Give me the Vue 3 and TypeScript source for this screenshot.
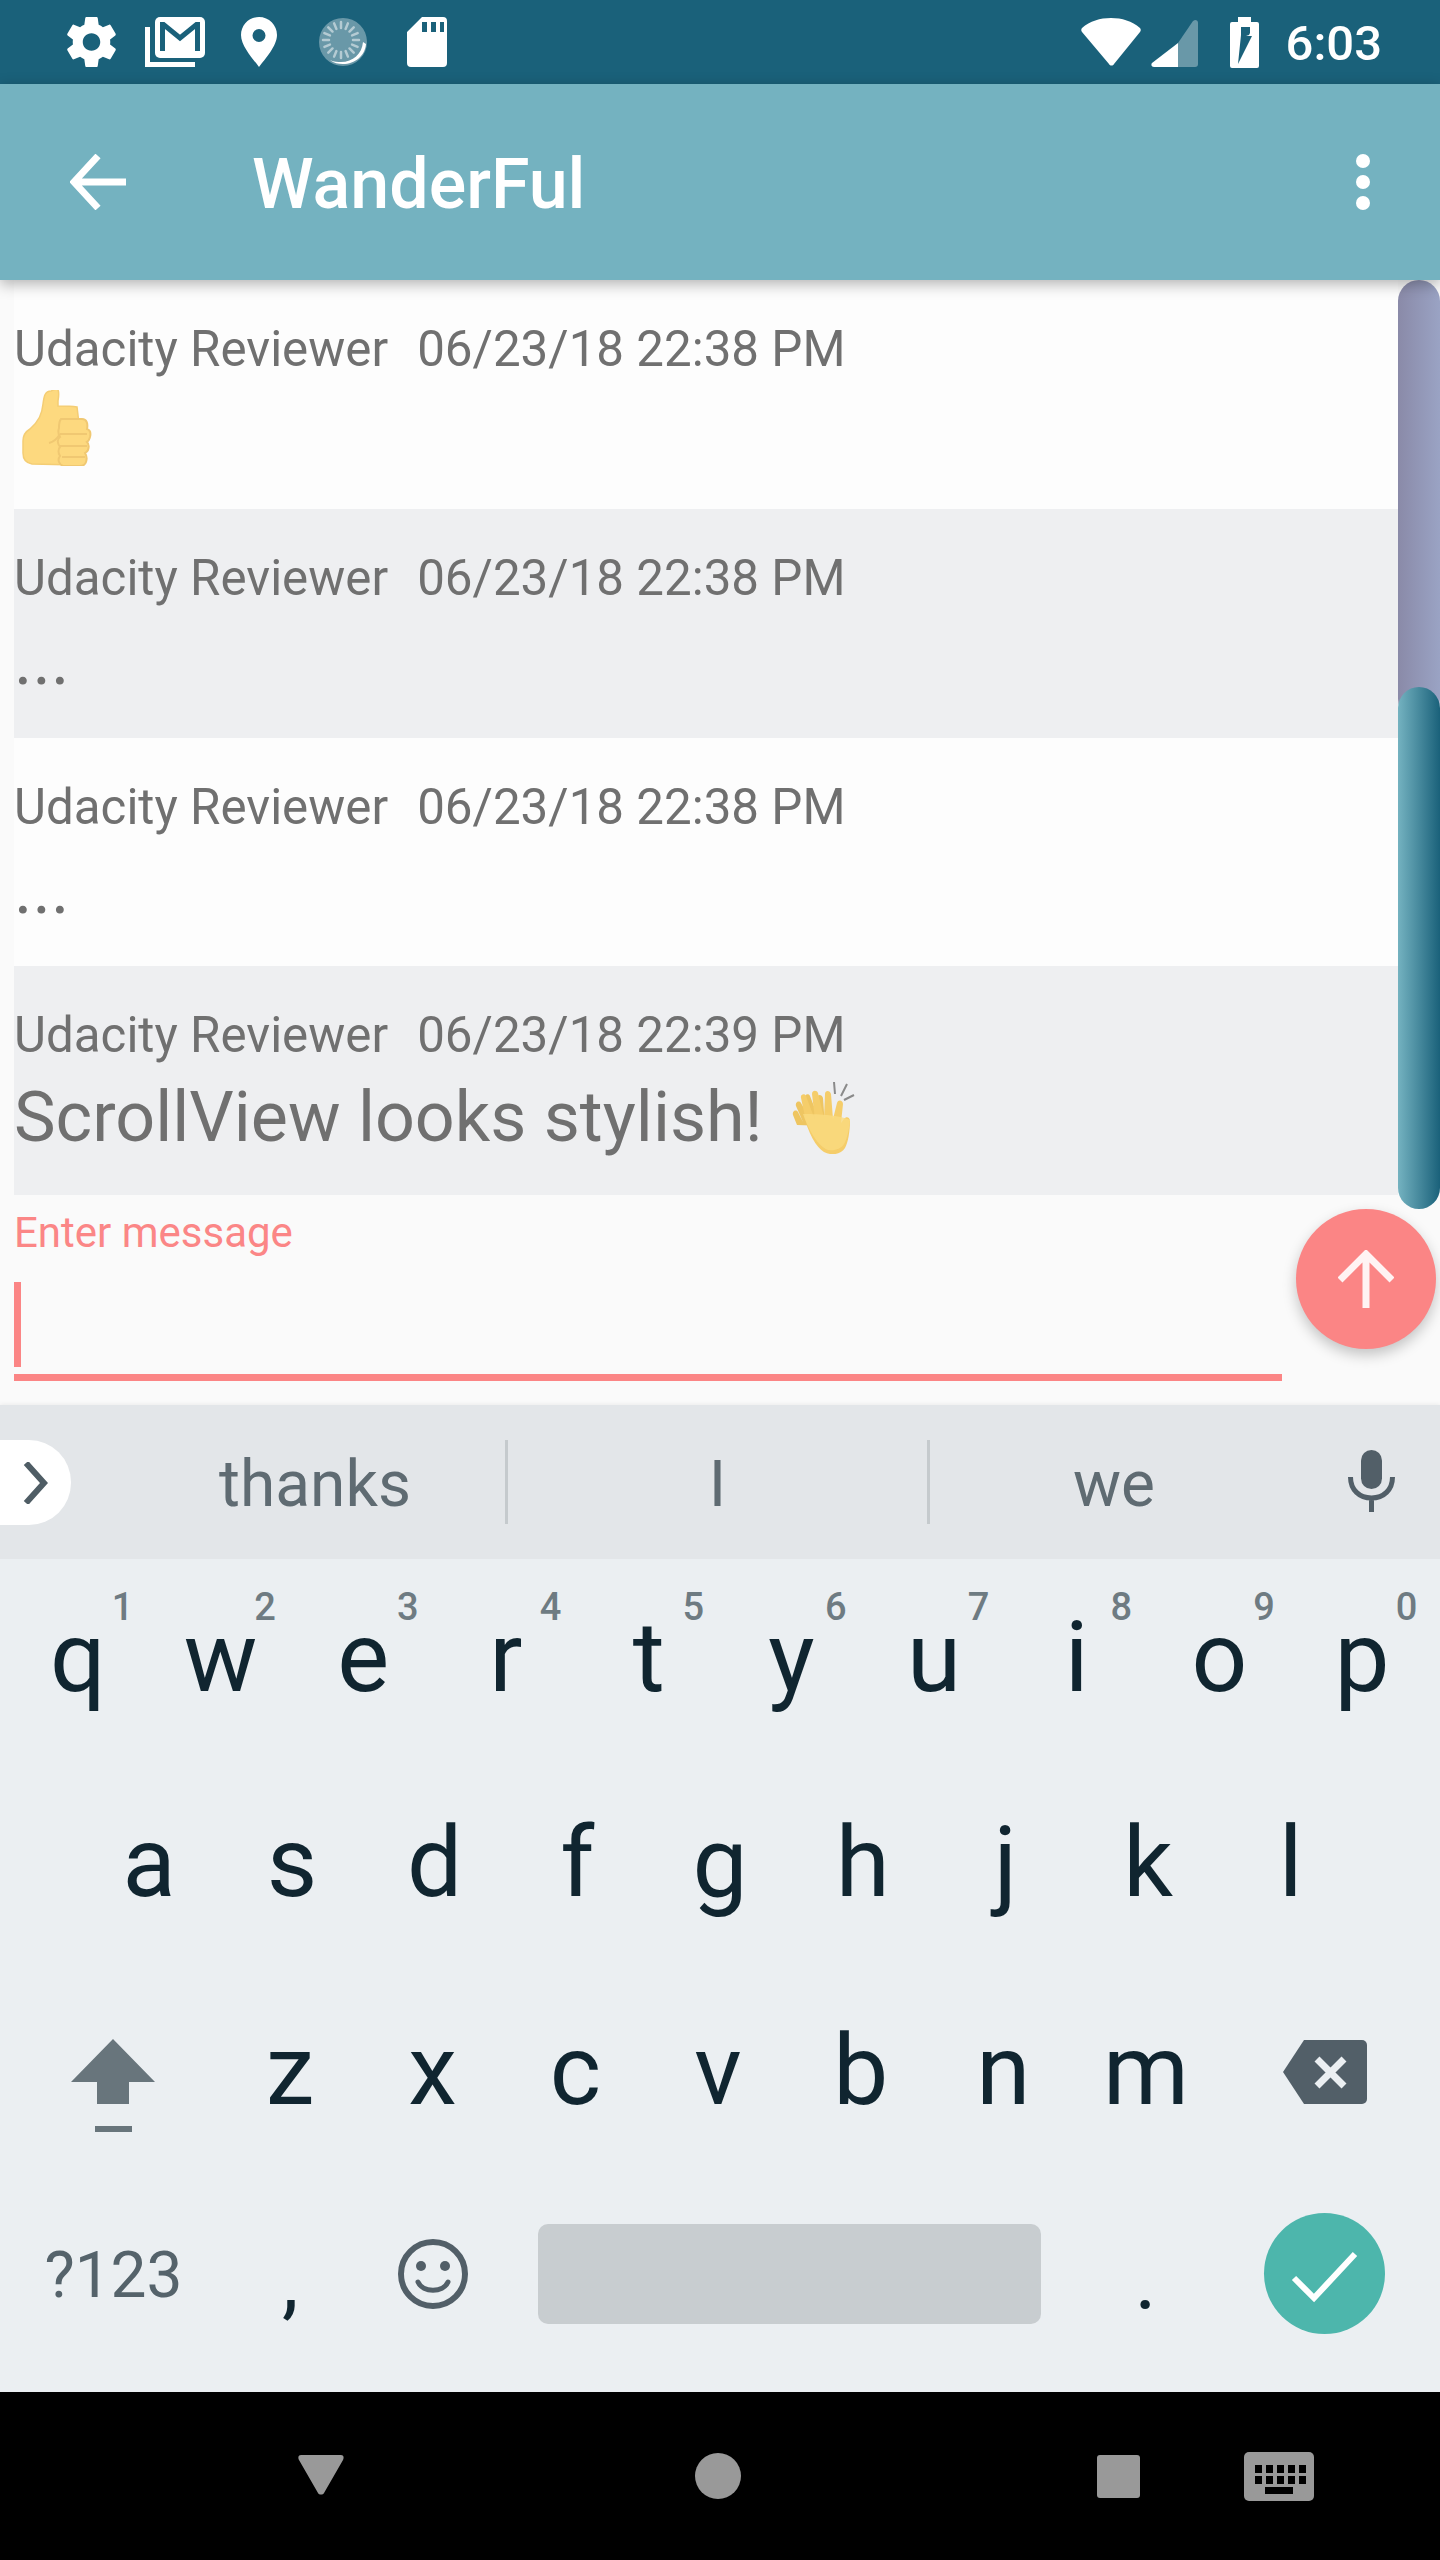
<script setup lang="ts">
const messages = [
  { time: '06/23/18 22:38 PM', text: '', emoji: 'thumb' },
  { time: '06/23/18 22:38 PM', text: '...', emoji: '' },
  { time: '06/23/18 22:38 PM', text: '...', emoji: '' },
  { time: '06/23/18 22:39 PM', text: 'ScrollView looks stylish!', emoji: 'clap' },
]

const topRow = [
  ['q', '1'], ['w', '2'], ['e', '3'], ['r', '4'], ['t', '5'],
  ['y', '6'], ['u', '7'], ['i', '8'], ['o', '9'], ['p', '0'],
]
const midRow = ['a', 's', 'd', 'f', 'g', 'h', 'j', 'k', 'l']
const lowRow = ['z', 'x', 'c', 'v', 'b', 'n', 'm']

const spinnerTicks = Array.from({ length: 16 }, (_, i) => i * 22.5)
const kbDots = [0, 1, 2, 3, 4]
</script>

<template>
  <div class="screen">
    <div class="status-bar">
      <div class="status-slot">
        <svg width="49" height="50" viewBox="2.4 2 19.2 20"><path fill="#fff" d="M19.43 12.98c.04-.32.07-.64.07-.98s-.03-.66-.07-.98l2.11-1.65c.19-.15.24-.42.12-.64l-2-3.46c-.12-.22-.39-.3-.61-.22l-2.49 1c-.52-.4-1.08-.73-1.69-.98l-.38-2.65C14.46 2.18 14.25 2 14 2h-4c-.25 0-.46.18-.49.42l-.38 2.65c-.61.25-1.17.59-1.69.98l-2.49-1c-.23-.09-.49 0-.61.22l-2 3.46c-.13.22-.07.49.12.64l2.11 1.65c-.04.32-.07.65-.07.98s.03.66.07.98l-2.11 1.65c-.19.15-.24.42-.12.64l2 3.46c.12.22.39.3.61.22l2.49-1c.52.4 1.08.73 1.69.98l.38 2.65c.03.24.24.42.49.42h4c.25 0 .46-.18.49-.42l.38-2.65c.61-.25 1.17-.59 1.69-.98l2.49 1c.23.09.49 0 .61-.22l2-3.46c.12-.22.07-.49-.12-.64l-2.11-1.65zM12 15.5c-1.93 0-3.5-1.57-3.5-3.5s1.57-3.5 3.5-3.5 3.5 1.57 3.5 3.5-1.57 3.5-3.5 3.5z" /></svg>
      </div>
      <div class="status-slot">
        <svg width="60" height="50" viewBox="0 0 60 50">
          <path d="M2.500 10v37.500h47.500" fill="none" stroke="#fff" stroke-width="5" />
          <rect x="10" y="0" width="50" height="41" rx="5" fill="#fff" />
          <path d="M17.500 34V7.500h1L35 21 51.500 7.500h1V34" fill="none" stroke="#1a617a" stroke-width="5" />
        </svg>
      </div>
      <div class="status-slot">
        <svg width="36" height="50" viewBox="0 0 36 50"><path fill="#fff" fill-rule="evenodd" d="M18 0C8 0 0 8 0 18c0 11 12 24 18 32 6-8 18-21 18-32C36 8 28 0 18 0zm0 12a6.500 6.500 0 1 1 0 13 6.500 6.500 0 0 1 0-13z" /></svg>
      </div>
      <div class="status-slot">
        <svg width="48" height="50" viewBox="0 0 48 50">
          <circle cx="24" cy="25" r="24" fill="#fff" opacity="0.35" />
          <path d="M47 27c-1 12-11 20-23 20-5 0-9-1-13-4 4 2 8 2 11 2 12 0 21-8 22-20z" fill="#fff" />
          <g stroke="#fff" stroke-width="2.500" stroke-linecap="round" opacity="0.5">
            <line v-for="deg in spinnerTicks" :key="deg" x1="22" y1="5" x2="22" y2="11" :transform="`rotate(${deg} 22 23)`" />
          </g>
        </svg>
      </div>
      <div class="status-slot">
        <svg width="40" height="50" viewBox="0 0 40 50"><path fill="#fff" fill-rule="evenodd" d="M15 0h21a4 4 0 0 1 4 4v42a4 4 0 0 1-4 4H4a4 4 0 0 1-4-4V15zM15 5v10h5V5zm9 0v10h5V5zm9 0v10h4V5z" /></svg>
      </div>
      <div class="status-right">
        <svg width="60" height="48" viewBox="0 0 60 48"><path fill="#fff" d="M30 0c11 0 21 3 29 10 1 1 1 3 0 4L33 46c-1 2-4 2-5 0L1 14c-1-1-1-3 0-4C9 3 19 0 30 0z" /></svg>
        <svg class="signal" width="47" height="47" viewBox="0 0 47 47">
          <path fill="#fff" opacity="0.35" d="M44 0c2 0 3 1 3 3v41c0 2-1 3-3 3H27V23L42 1z" />
          <path fill="#fff" d="M27 23v24H3c-3 0-3-3-2-4z" />
        </svg>
        <svg class="battery" width="29" height="51" viewBox="0 0 29 51">
          <path fill="#fff" fill-rule="evenodd" d="M8 0h13v5h6a2 2 0 0 1 2 2v42a2 2 0 0 1-2 2H2a2 2 0 0 1-2-2V7a2 2 0 0 1 2-2h6zm3 18-3 29 14-28h-6l3-1 1-2v-6H11z" />
        </svg>
        <span class="clock">6:03</span>
      </div>
    </div>

    <header class="app-bar">
      <svg class="back" width="56" height="56" viewBox="0 0 56 56"><path d="M56 28H5M28 2 4 28l24 26" fill="none" stroke="#fff" stroke-width="7" /></svg>
      <h1 class="title">WanderFul</h1>
      <div class="more"><i></i><i></i><i></i></div>
    </header>

    <div class="chat">
      <div v-for="(msg, i) in messages" :key="i" class="row" :class="{ alt: i % 2 === 1 }">
        <div class="meta"><span>Udacity Reviewer</span><span>{{ msg.time }}</span></div>
        <div class="body">
          <span v-if="msg.text">{{ msg.text }}</span>
          <svg v-if="msg.emoji === 'thumb'" class="thumb" width="71" height="76" viewBox="0 0 71 76">
            <path fill="#fdd97f" stroke="#f4cd74" stroke-width="1.500" d="M29 1c-6 0-7 5-8 13-1 10-4 17-13 25-5 3-7 6-7 12v12c0 6 3 10 9 11l44 1c5 0 8-3 7-8l-6-50c-6-1-16-1-19-1l0-5c1-6 1-9 0-11 0-1-3-1-7 1z" />
            <path fill="#fdd97f" stroke="#f0c872" stroke-width="2" d="M39 29h21c5 0 6 5 5 10 3 1 4 4 3 8-1 3-1 4-3 5 2 2 2 5 1 8-1 2-2 2-3 3 2 3 2 6 1 9-1 3-3 4-6 4H41c-4-2-6-6-3-10-2-3-2-7 0-9-3-4-3-8 0-10-2-3-2-6-1-9 0-3 0-7 2-9z" />
            <path fill="none" stroke="#f0c872" stroke-width="2" d="M38 44h27M38 56h27M40 67h23M38 44c-3 5-6 8-11 9" />
          </svg>
          <svg v-else-if="msg.emoji === 'clap'" class="clap" width="64" height="72" viewBox="0 0 64 72">
            <path fill="none" stroke="#8a8a8a" stroke-width="2" d="M43 0l1 12M56 2l-6 12M63 13l-10 5" />
            <path fill="#eec561" d="M6 43 2 33c-1-4 3-6 5-3l5 10-7-16c-1-4 3-6 5-3l9 16-5-21c-1-4 4-5 5-2l7 18 0-16c0-4 5-4 6 0l2 28z" />
            <path fill="#f5cd6a" d="M16 44 10 16c-1-4 4-5 5-2l9 24-3-26c0-4 5-4 6-1l6 25 1-24c0-4 5-4 6 0l2 25 4-16c1-4 6-3 6 1l-2 19 3-4c2-3 6-2 6 2 0 10-2 22-5 27-3 5-10 7-15 6-8-1-16-9-23-28z" />
            <path fill="#fadb80" d="M12 32c4 0 35 0 47 6-1 10-3 19-6 24-3 5-10 7-15 6-8-1-19-16-26-36z" opacity="0.8" />
          </svg>
        </div>
      </div>
    </div>

    <div class="compose">
      <label class="compose-label">Enter message</label>
      <div class="caret"></div>
      <div class="underline"></div>
    </div>

    <section class="keyboard">
      <div class="strip">
        <div class="pill">
          <svg width="25" height="42" viewBox="0 0 25 42"><path d="M3 1l18 20L3 41" fill="none" stroke="#4f5d65" stroke-width="6" /></svg>
        </div>
        <span class="word">thanks</span>
        <i class="divider"></i>
        <span class="word">I</span>
        <i class="divider"></i>
        <span class="word">we</span>
        <div class="mic">
          <svg width="47" height="62" viewBox="0 0 47 62">
            <rect x="13" y="0" width="21" height="39" rx="10.500" fill="#525f68" />
            <path d="M2.500 27c0 13 9 21 21 21s21-8 21-21M23.500 48v14" fill="none" stroke="#525f68" stroke-width="5" />
          </svg>
        </div>
      </div>

      <div class="keys">
        <div class="key-row first">
          <div v-for="k in topRow" :key="k[0]" class="key">{{ k[0] }}<sup class="hint">{{ k[1] }}</sup></div>
        </div>
        <div class="key-row">
          <div v-for="k in midRow" :key="k" class="key">{{ k }}</div>
        </div>
        <div class="key-row">
          <div class="key wide">
            <svg class="shift" width="84" height="93" viewBox="0 0 84 93">
              <path fill="#68757c" d="M42 0l42 43H58v22H26V43H0z" />
              <rect x="24" y="87" width="37" height="6" fill="#68757c" />
            </svg>
          </div>
          <div v-for="k in lowRow" :key="k" class="key">{{ k }}</div>
          <div class="key wide">
            <svg class="del" width="84" height="64" viewBox="0 0 84 64">
              <path fill="#525f68" d="M21 0h58a5 5 0 0 1 5 5v54a5 5 0 0 1-5 5H21L0 32z" />
              <path d="M34 19l27 27M61 19 34 46" stroke="#ebeff2" stroke-width="7" />
            </svg>
          </div>
        </div>
        <div class="key-row bottom">
          <div class="key wide sym">?123</div>
          <div class="key punct">,</div>
          <div class="key">
            <svg class="smile" width="70" height="70" viewBox="0 0 70 70">
              <circle cx="35" cy="35" r="32" fill="none" stroke="#525f68" stroke-width="6" />
              <circle cx="23" cy="27" r="5" fill="#525f68" />
              <circle cx="47" cy="27" r="5" fill="#525f68" />
              <path d="M20 43c5 11 25 11 30 0" fill="none" stroke="#525f68" stroke-width="5" stroke-linecap="round" />
            </svg>
          </div>
          <div class="space-key"><div class="space-bar"></div></div>
          <div class="key punct">.</div>
          <div class="key wide">
            <div class="enter">
              <svg width="70" height="60" viewBox="0 0 70 60"><path d="M4 34l20 20L65 10" fill="none" stroke="#fff" stroke-width="6" /></svg>
            </div>
          </div>
        </div>
      </div>
    </section>

    <nav class="nav-bar">
      <svg class="nav-back" width="46" height="40" viewBox="0 0 46 40"><path fill="#999" d="M3 0h40c3 0 3 3 2 5L26 38c-1 2-5 2-6 0L1 5C0 3 0 0 3 0z" /></svg>
      <i class="nav-home"></i>
      <i class="nav-recent"></i>
      <svg class="nav-kbd" width="70" height="49" viewBox="0 0 70 49">
        <rect width="70" height="49" rx="5" fill="#999" />
        <g fill="#000">
          <rect v-for="d in kbDots" :key="'a' + d" :x="11 + d * 11" y="13" width="7" height="8" />
          <rect v-for="d in kbDots" :key="'b' + d" :x="11 + d * 11" y="24" width="7" height="8" />
          <rect x="21" y="35" width="28" height="7" />
        </g>
      </svg>
    </nav>

    <div class="scroll-track"></div>
    <div class="scroll-thumb"></div>
    <button class="fab">
      <svg width="56" height="58" viewBox="0 0 56 58"><path d="M28 58V4M2 30 28 4l26 26" fill="none" stroke="#fff" stroke-opacity="0.9" stroke-width="7" /></svg>
    </button>
  </div>
</template>

<style scoped>
.screen {
  position: relative;
  width: 1440px;
  height: 2560px;
  overflow: hidden;
  background: #fafafa;
  font-family: Roboto, "Liberation Sans", sans-serif;
  display: flex;
  flex-direction: column;
}

.status-bar {
  height: 84px;
  flex: none;
  background: #1a617a;
  display: flex;
  align-items: center;
  padding-left: 49px;
}

.status-slot {
  width: 84px;
  display: flex;
  justify-content: center;
}

.status-right {
  margin-left: auto;
  padding-right: 58px;
  display: flex;
  align-items: center;
}

.signal {
  margin-left: 10px;
  margin-top: 3px;
}

.battery {
  margin-left: 32px;
}

.clock {
  margin-left: 27px;
  margin-top: 4px;
  font-size: 49px;
  font-weight: 500;
  color: #fff;
  line-height: 50px;
}

.app-bar {
  height: 196px;
  flex: none;
  background: #74b2c0;
  display: flex;
  align-items: center;
  position: relative;
  z-index: 1;
  box-shadow: 0 4px 14px rgba(0, 0, 0, 0.3);
}

.back {
  margin-left: 70px;
}

.title {
  margin: 4px 0 0 126px;
  font-size: 70px;
  font-weight: 500;
  color: #fff;
  line-height: 82px;
}

.more {
  margin-left: auto;
  margin-right: 70px;
  display: flex;
  flex-direction: column;
  gap: 7px;
}

.more i {
  display: block;
  width: 14px;
  height: 14px;
  border-radius: 50%;
  background: #fff;
}

.chat {
  height: 915px;
  flex: none;
  padding-left: 14px;
  padding-right: 42px;
}

.row {
  height: 228.75px;
  box-sizing: border-box;
  padding-top: 35px;
  background: #fdfdfd;
  color: #707070;
}

.row.alt {
  background: #eeeff1;
}

.meta {
  display: flex;
  gap: 29px;
  font-size: 49.3px;
  line-height: 69px;
}

.body {
  margin-top: 6px;
  height: 82px;
  font-size: 70px;
  line-height: 82px;
}

.thumb {
  display: block;
  margin: 2px 0 0 8px;
}

.clap {
  vertical-align: -13px;
  margin-left: 28px;
}

.compose {
  height: 210px;
  flex: none;
  padding: 13px 0 0 14px;
  box-sizing: border-box;
}

.compose-label {
  display: block;
  font-size: 42px;
  line-height: 50px;
  color: #fb8686;
}

.caret {
  width: 7px;
  height: 85px;
  margin-top: 24px;
  background: #fb8585;
}

.underline {
  width: 1268px;
  height: 7px;
  margin-top: 7px;
  background: #fb8585;
}

.keyboard {
  height: 987px;
  flex: none;
  background: #ebeff2;
  box-shadow: 0 -1px 4px rgba(0, 0, 0, 0.06);
}

.strip {
  height: 154px;
  box-sizing: border-box;
  padding-top: 35px;
  background: #e3e6e9;
  display: grid;
  grid-template-columns: 125px 380px 3px 419px 3px 368px 1fr;
  align-items: start;
}

.pill {
  width: 71px;
  height: 85px;
  border-radius: 0 42px 42px 0;
  background: #fff;
  display: flex;
  align-items: center;
  padding-left: 23px;
  box-sizing: border-box;
}

.word {
  padding-top: 3px;
  text-align: center;
  font-size: 64px;
  line-height: 84px;
  color: #5f6b72;
}

.divider {
  height: 84px;
  background: #c5cacd;
}

.mic {
  padding-top: 10px;
  padding-left: 4px;
  display: flex;
  justify-content: center;
}

.keys {
  height: 833px;
  display: grid;
  grid-template-rows: repeat(4, 1fr);
}

.key-row {
  display: flex;
  justify-content: center;
}

.key {
  position: relative;
  width: 142.7px;
  box-sizing: border-box;
  padding-bottom: 18px;
  display: flex;
  align-items: center;
  justify-content: center;
  font-size: 98px;
  line-height: 115px;
  color: #102530;
}

.first .key {
  padding-bottom: 11px;
}

.key.wide {
  width: 215px;
}

.key.wide:first-child {
  width: 211px;
}

.hint {
  position: absolute;
  top: 29px;
  right: 16px;
  font-size: 38px;
  font-weight: 500;
  line-height: 38px;
  color: #6e7b82;
}

.shift {
  margin-top: 30px;
}

.del {
  margin-top: 2px;
}

.bottom .key {
  padding-bottom: 28px;
}

.key.sym {
  padding-bottom: 24px;
  font-size: 64px;
  line-height: 75px;
  color: #55636b;
}

.key.punct {
  padding-bottom: 14px;
  font-size: 84px;
  line-height: 98px;
}

.space-key {
  width: 570px;
  box-sizing: border-box;
  padding: 0 33px 28px 34px;
  display: flex;
  align-items: center;
}

.space-bar {
  width: 100%;
  height: 100px;
  border-radius: 10px;
  background: #c8cdd0;
}

.enter {
  width: 121px;
  height: 121px;
  border-radius: 50%;
  background: #4db6ac;
  display: flex;
  align-items: center;
  justify-content: center;
}

.nav-bar {
  position: relative;
  flex: 1;
  background: #000;
  display: grid;
  grid-template-columns: 298px 46px 351px 46px 356px 43px 104px 70px 1fr;
  align-items: center;
}

.nav-back {
  grid-column: 2;
  margin-bottom: 2px;
}

.nav-home {
  grid-column: 4;
  width: 46px;
  height: 46px;
  border-radius: 50%;
  background: #999;
}

.nav-recent {
  grid-column: 6;
  height: 43px;
  border-radius: 3px;
  background: #999;
}

.nav-kbd {
  grid-column: 8;
}

.scroll-track {
  position: absolute;
  top: 280px;
  left: 1398px;
  width: 42px;
  height: 440px;
  border-radius: 21px;
  background: linear-gradient(90deg, #8a8aa8, #9aa3c4);
}

.scroll-thumb {
  position: absolute;
  top: 687px;
  left: 1398px;
  width: 42px;
  height: 522px;
  border-radius: 21px;
  background: linear-gradient(90deg, #74b2c0, #1a617a);
}

.fab {
  position: absolute;
  top: 1209px;
  left: 1296px;
  width: 140px;
  height: 140px;
  padding: 0;
  border: 0;
  border-radius: 50%;
  background: #fb8585;
  box-shadow: 0 6px 14px rgba(0, 0, 0, 0.22);
  display: flex;
  align-items: center;
  justify-content: center;
}
</style>
